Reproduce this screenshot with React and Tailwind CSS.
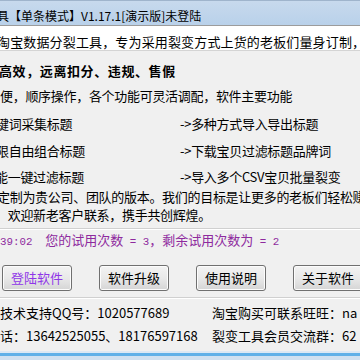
import React from "react";

const cjk = "font-['Noto_Sans_CJK_SC',sans-serif]";
const mono = "font-['Liberation_Mono','Noto_Sans_CJK_SC',monospace] text-[10.8px]";

const Button = ({ label, purple }) => (
  <div
    className={`h-[26px] w-[70px] shrink-0 rounded-[3px] border border-[#707070] bg-gradient-to-b from-[#f3f3f3] via-[#e9e9e9] to-[#d5d5d5] shadow-[inset_0_0_0_1px_#fcfcfc] flex items-center justify-center text-[13px] ${
      purple ? "text-[#8f35e8]" : "text-black"
    }`}
  >
    {label}
  </div>
);

const App = () => {
  return (
    <div className={`w-[360px] h-[360px] overflow-hidden bg-[#f0f0f0] text-black ${cjk} flex flex-col`}>
      {/* title bar */}
      <div className="h-[25px] shrink-0 border-t border-[#9fb4cc] bg-gradient-to-b from-[#c7d9ed] to-[#b9d1ea] overflow-hidden whitespace-nowrap">
        <div className="ml-[-3px] pt-[7px] text-[12px] leading-[16px]">
          具【单条模式】V1.17.1[演示版]未登陆
        </div>
      </div>

      {/* description box */}
      <div className="h-[26px] shrink-0 border-t border-[#9c9c9c] border-b border-b-[#d4d4d4] bg-white overflow-hidden whitespace-nowrap">
        <div className="ml-[-3px] pt-[7px] text-[13px] leading-[17px] tracking-[0.15px]">
          淘宝数据分裂工具，专为采用裂变方式上货的老板们量身订制，对
        </div>
      </div>

      <div className="text-[13px] tracking-[-0.3px] whitespace-nowrap overflow-hidden">
        <div className="mt-[10px] h-[20px] leading-[20px] font-bold tracking-[0.6px] ml-[-1px]">
          高效，远离扣分、违规、售假
        </div>
        <div className="mt-[5px] h-[20px] leading-[20px]">
          便，顺序操作，各个功能可灵活调配，软件主要功能
        </div>

        <div className="mt-[8px] h-[20px] leading-[20px] grid grid-cols-[180px_180px]">
          <span className="ml-[-4px]">键词采集标题</span>
          <span>-&gt;多种方式导入导出标题</span>
        </div>
        <div className="mt-[7px] h-[20px] leading-[20px] grid grid-cols-[180px_180px]">
          <span className="ml-[-4px]">限自由组合标题</span>
          <span>-&gt;下载宝贝过滤标题品牌词</span>
        </div>
        <div className="mt-[6px] h-[20px] leading-[20px] grid grid-cols-[180px_180px]">
          <span className="ml-[-5px]">能一键过滤标题</span>
          <span>-&gt;导入多个CSV宝贝批量裂变</span>
        </div>

        <div className="mt-[1px] h-[18px] leading-[18px] ml-[-3px]">
          定制为贵公司、团队的版本。我们的目标是让更多的老板们轻松赚
        </div>
        <div className="h-[18px] leading-[18px] ml-[-5px]">
          ，欢迎新老客户联系，携手共创辉煌。
        </div>
      </div>

      <div className="mt-[4px] h-[2px] shrink-0 border-t border-[#d0d0d0] border-b border-b-white" />

      <div className="mt-[0px] h-[20px] leading-[20px] text-[13px] text-[#8e2a9e] whitespace-pre">
        <span className={mono}>39:02  </span>您的试用次数<span className={mono}> = 3</span>，剩余试用次数为<span className={mono}> = 2</span>
      </div>

      {/* buttons */}
      <div className="mt-[15px] flex gap-[27px] pl-[2px] overflow-hidden">
        <Button label="登陆软件" purple />
        <Button label="软件升级" />
        <Button label="使用说明" />
        <Button label="关于软件" />
      </div>

      <div className="mt-[6px] h-[2px] shrink-0 border-t border-[#d0d0d0] border-b border-b-white" />

      <div className="text-[13px] whitespace-nowrap overflow-hidden">
        <div className="mt-[4px] h-[20px] leading-[20px] grid grid-cols-[212px_148px]">
          <span>技术支持QQ号：1020577689</span>
          <span>淘宝购买可联系旺旺：na</span>
        </div>
        <div className="mt-[3px] h-[20px] leading-[20px] grid grid-cols-[212px_148px]">
          <span>话：13642525055、18176597168</span>
          <span>裂变工具会员交流群：62</span>
        </div>
      </div>

      {/* bottom frame */}
      <div className="mt-auto h-[9px] shrink-0 flex flex-col">
        <div className="h-[2px] bg-[#dbe8f4]" />
        <div className="h-[3px] bg-[#5fb0e8]" />
        <div className="flex-1 bg-[#cfe0f0]" />
      </div>
    </div>
  );
};

export default App;
